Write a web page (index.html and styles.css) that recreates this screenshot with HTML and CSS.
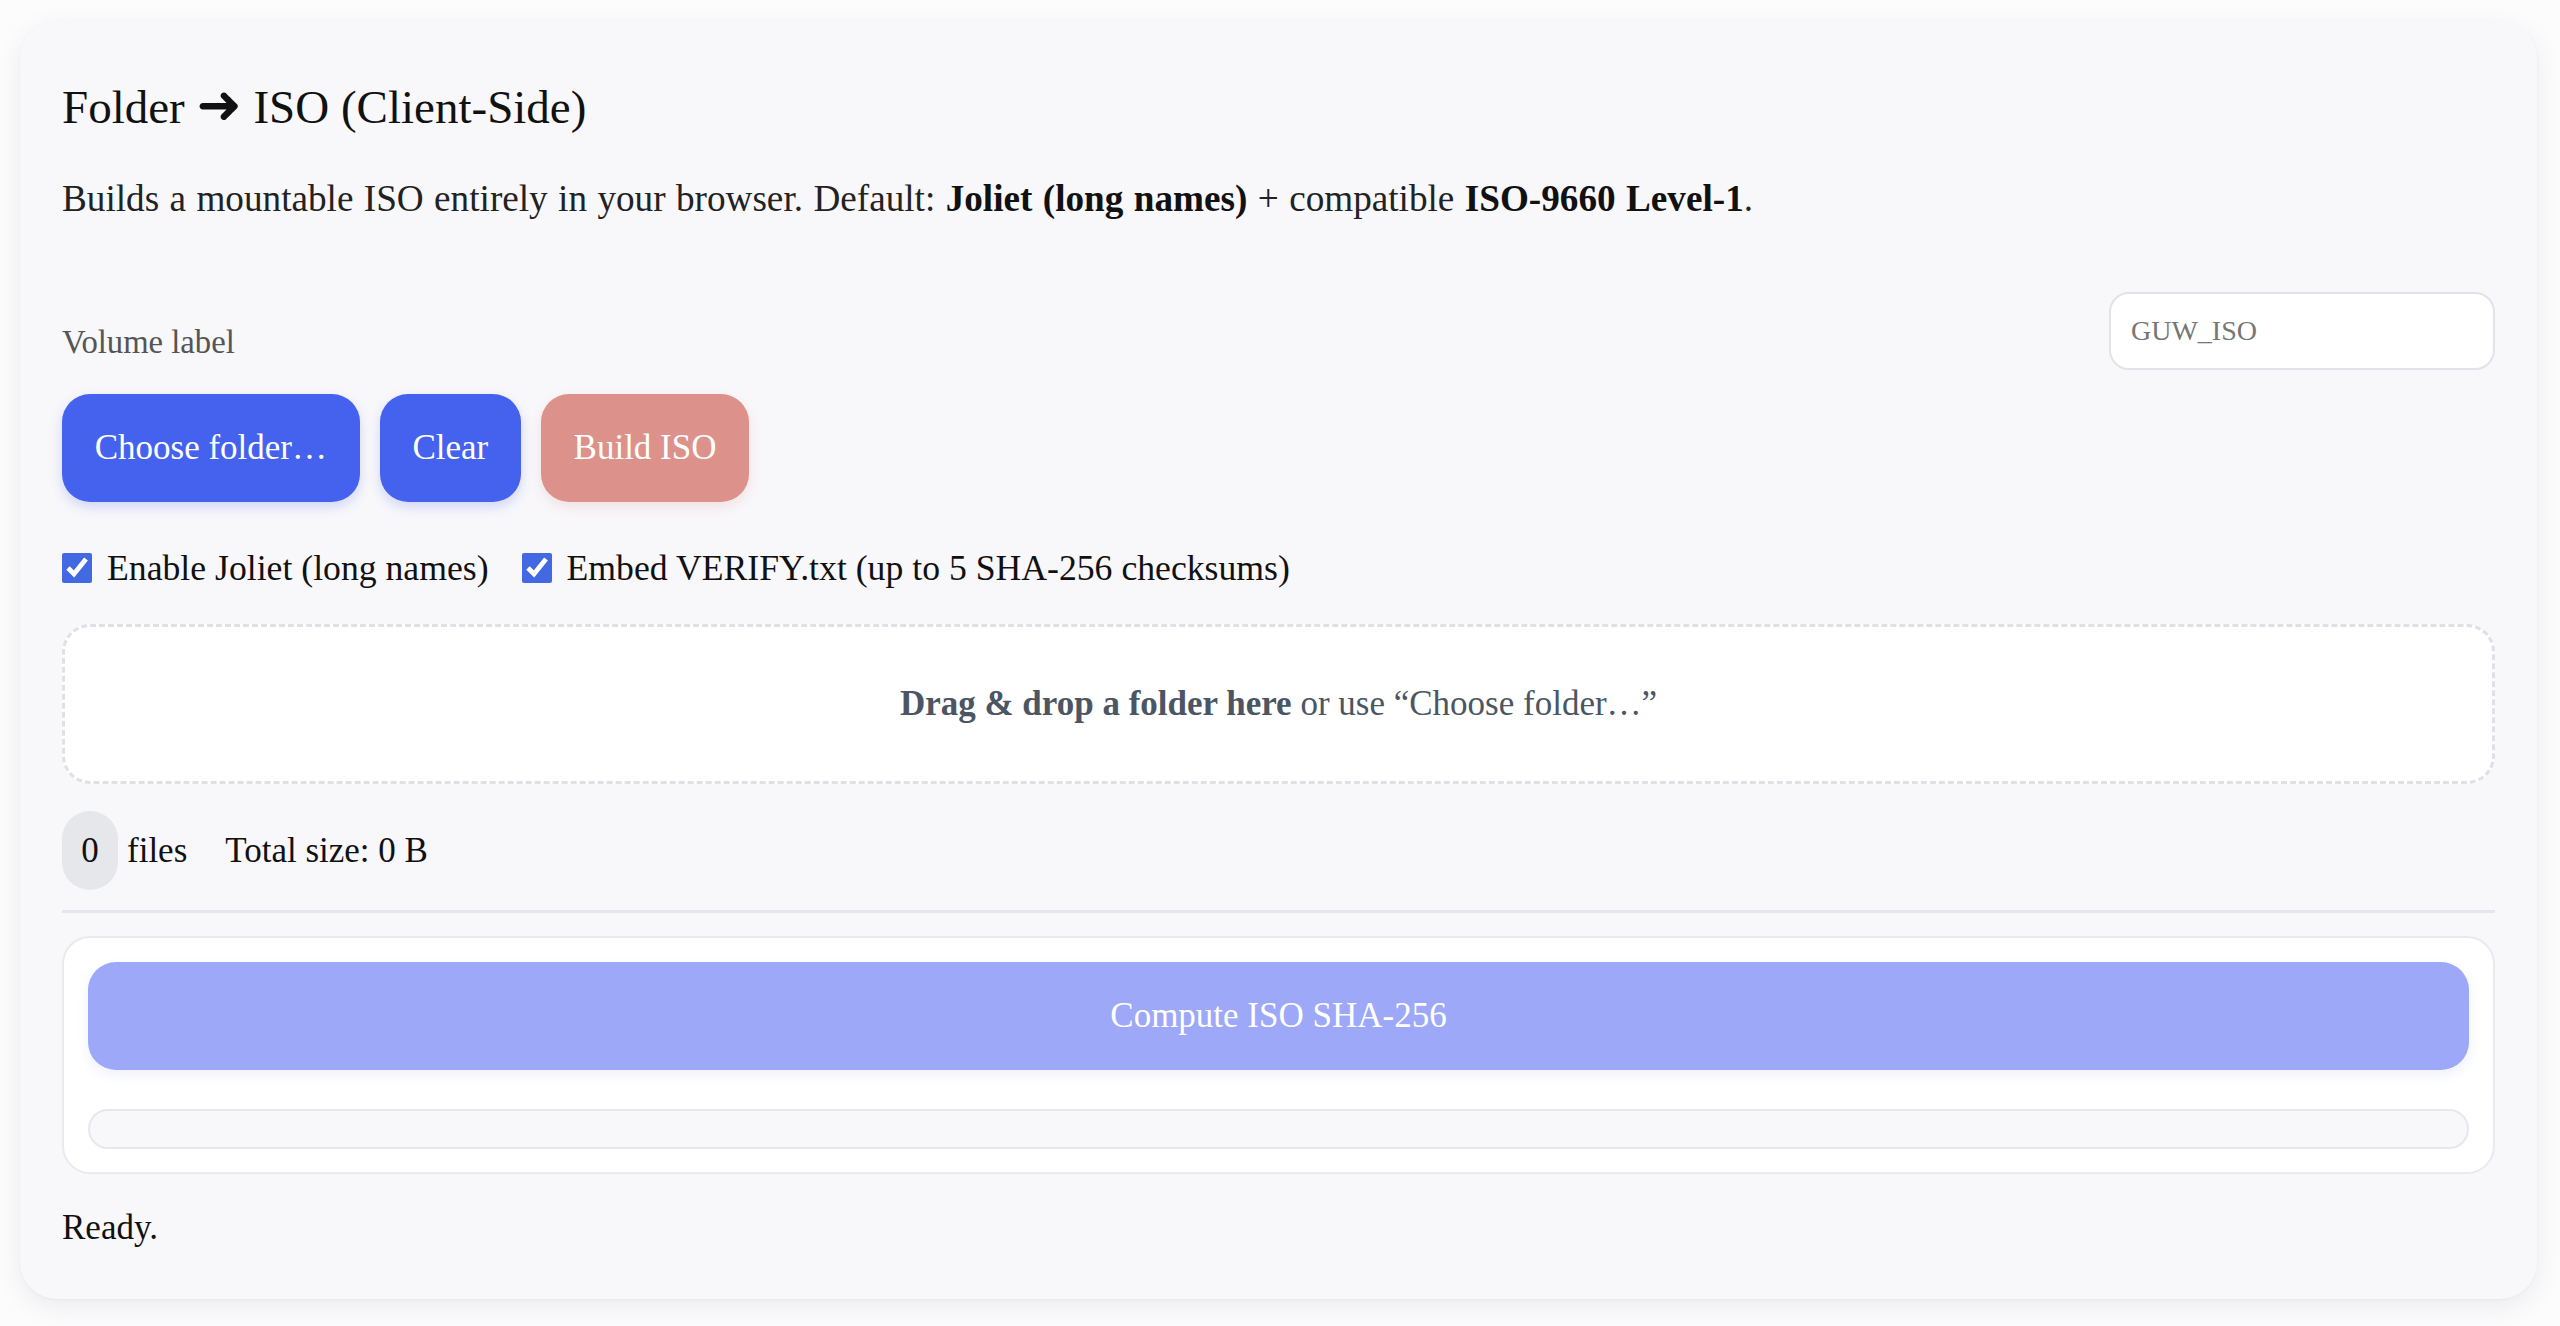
FILE: index.html
```html
<!DOCTYPE html>
<html lang="en">
<head>
<meta charset="utf-8">
<title>Folder ➜ ISO (Client-Side)</title>
<link rel="stylesheet" href="styles.css">
</head>
<body>
<main class="card">
  <h2 class="title">Folder <span class="arrow">➜</span> ISO (Client-Side)</h2>
  <p class="desc">Builds a mountable ISO entirely in your browser. Default: <b>Joliet (long names)</b> + compatible <b>ISO-9660 Level-1</b>.</p>
  <div class="vol-row">
    <label class="vol-label" for="vol">Volume label</label>
    <input class="vol-input" id="vol" type="text" placeholder="GUW_ISO">
  </div>
  <div class="actions">
    <button class="btn btn-primary">Choose folder…</button>
    <button class="btn btn-primary">Clear</button>
    <button class="btn btn-danger" disabled>Build ISO</button>
  </div>
  <div class="options">
    <label class="opt"><input type="checkbox" checked><span>Enable Joliet (long names)</span></label>
    <label class="opt"><input type="checkbox" checked><span>Embed VERIFY.txt (up to 5 SHA-256 checksums)</span></label>
  </div>
  <div class="drop"><span><b>Drag &amp; drop a folder here</b> or use “Choose folder…”</span></div>
  <div class="stats">
    <span class="badge">0</span>
    <span class="files">files</span>
    <span class="total">Total size: 0 B</span>
  </div>
  <div class="divider"></div>
  <section class="panel">
    <button class="btn-compute" disabled>Compute ISO SHA-256</button>
    <div class="progress"></div>
  </section>
  <div class="status">Ready.</div>
</main>
</body>
</html>
```
FILE: styles.css
```css
html, body {
  margin: 0;
  background: #fcfcfd;
}
body {
  padding: 21px 23px 28px 20px;
  font-family: "Liberation Serif", "Times New Roman", serif;
  color: #111;
}
.card {
  display: flex;
  flex-direction: column;
  background: #f8f7fa;
  border-radius: 37px;
  padding: 42px 42px 51px 42px;
  box-shadow: 0 8px 28px rgba(20, 20, 60, 0.07), 0 1px 3px rgba(20, 20, 60, 0.04);
}
.title {
  margin: 17px 0 0 0;
  font-size: 47px;
  font-weight: normal;
  line-height: 54px;
  color: #111;
}
.arrow {
  font-family: "DejaVu Sans", sans-serif;
  font-size: 54px;
  font-weight: bold;
  line-height: 0;
}
.desc {
  margin: 43px 0 0 0;
  font-size: 37.2px;
  line-height: 43px;
  word-spacing: 1.1px;
  color: #222;
}
.desc b {
  color: #111;
}
.vol-row {
  margin-top: 72px;
  display: flex;
  justify-content: space-between;
  align-items: flex-end;
}
.vol-label {
  font-size: 32.7px;
  line-height: 38px;
  color: #555;
  margin-bottom: 9px;
}
.vol-input {
  box-sizing: border-box;
  width: 386px;
  height: 78px;
  border: 2px solid #e2e2e8;
  border-radius: 20px;
  background: #fff;
  padding: 0 20px;
  font-family: "Liberation Serif", "Times New Roman", serif;
  font-size: 28px;
  color: #333;
  outline: none;
}
.vol-input::placeholder {
  color: #767676;
}
.actions {
  margin-top: 24px;
  display: flex;
  gap: 20px;
}
.btn {
  box-sizing: border-box;
  height: 108px;
  padding: 0 32.7px;
  border: none;
  border-radius: 28px;
  font-family: "Liberation Serif", "Times New Roman", serif;
  font-size: 35px;
  color: #fff;
}
.btn-primary {
  background: #4562ee;
  box-shadow: 0 5px 12px rgba(69, 98, 238, 0.22);
}
.btn-danger {
  background: #dc928a;
  box-shadow: 0 5px 12px rgba(220, 146, 138, 0.2);
}
.options {
  margin-top: 46px;
  display: flex;
  align-items: center;
  gap: 33px;
  height: 40px;
}
.opt {
  display: flex;
  align-items: center;
  gap: 15px;
  font-size: 35.7px;
  line-height: 40px;
  color: #111;
}
.opt input {
  width: 30px;
  height: 30px;
  margin: 0;
  accent-color: #4369e2;
}
.drop {
  margin-top: 36px;
  box-sizing: border-box;
  height: 160px;
  border: 3px dashed #dfe1e7;
  border-radius: 28px;
  background: #fff;
  display: flex;
  align-items: center;
  justify-content: center;
  font-size: 35px;
  color: #4b5563;
}
.stats {
  margin-top: 27px;
  display: flex;
  align-items: center;
  font-size: 35px;
  color: #111;
}
.badge {
  box-sizing: border-box;
  width: 56px;
  height: 79px;
  border-radius: 28px;
  background: #e6e7eb;
  display: flex;
  align-items: center;
  justify-content: center;
}
.files {
  margin-left: 9px;
}
.total {
  margin-left: 38px;
}
.divider {
  margin-top: 20px;
  height: 3px;
  background: #e6e6ec;
}
.panel {
  margin-top: 23px;
  background: #fff;
  border: 2px solid #e9e9ef;
  border-radius: 28px;
  padding: 24px 24px 23px 24px;
  display: flex;
  flex-direction: column;
}
.btn-compute {
  height: 108px;
  border: none;
  border-radius: 28px;
  background: #9da8f9;
  color: #fff;
  font-family: "Liberation Serif", "Times New Roman", serif;
  font-size: 35px;
  box-shadow: 0 5px 12px rgba(120, 130, 240, 0.12);
}
.progress {
  margin-top: 39px;
  box-sizing: border-box;
  height: 40px;
  border: 2px solid #e7e7ed;
  border-radius: 20px;
  background: #f8f8fa;
}
.status {
  margin-top: 34px;
  font-size: 35px;
  line-height: 40px;
  color: #111;
}
```
